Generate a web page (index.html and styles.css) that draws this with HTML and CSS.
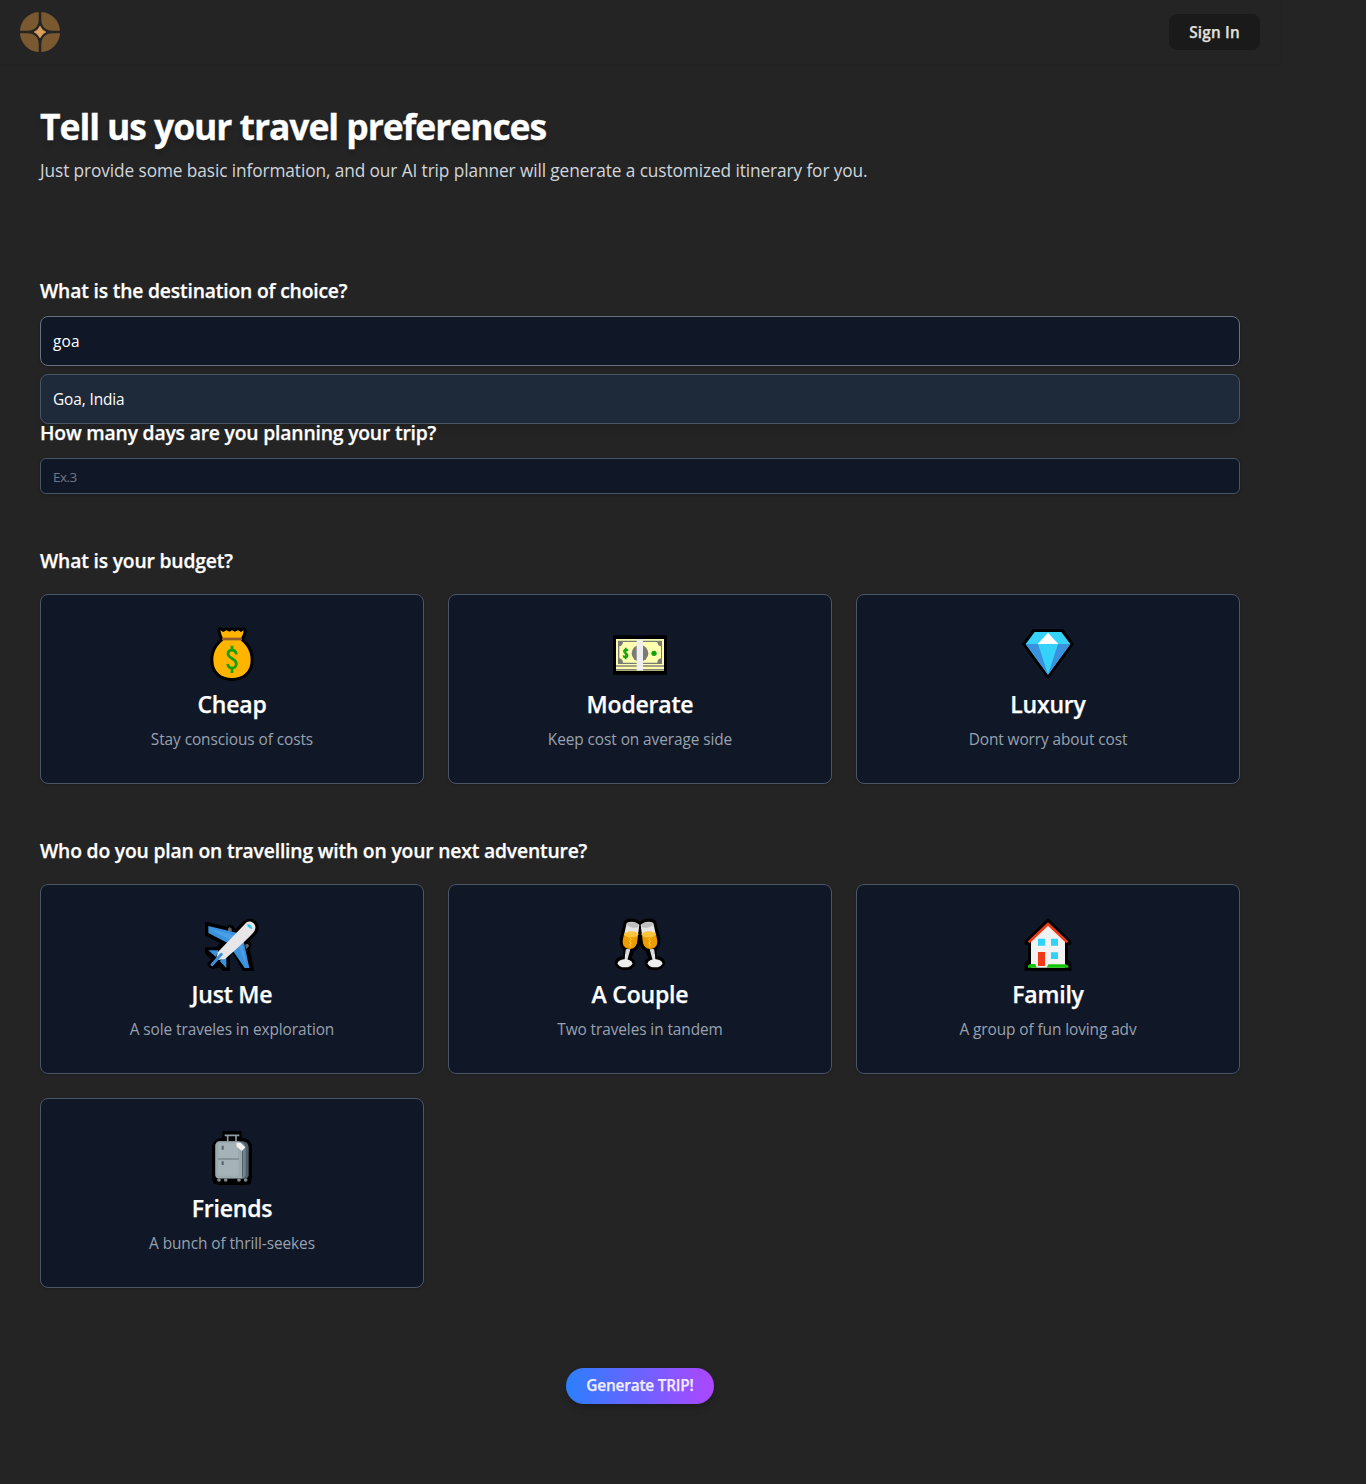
FILE: index.html
```html
<!DOCTYPE html>
<html lang="en">
<head>
<meta charset="utf-8">
<title>Trip Planner</title>
<link rel="stylesheet" href="styles.css">
</head>
<body>
<div class="page">
  <header class="header">
    <svg class="logo" viewBox="0 0 40 40">
      <g fill="#7a5931">
        <path d="M18.7 0V7Q18.7 18.7 7 18.7H0A20 20 0 0 1 18.7 0Z"/>
        <path d="M21.3 0V7Q21.3 18.7 33 18.7H40A20 20 0 0 0 21.3 0Z"/>
        <path d="M18.7 40V33Q18.7 21.3 7 21.3H0A20 20 0 0 0 18.7 40Z"/>
        <path d="M21.3 40V33Q21.3 21.3 33 21.3H40A20 20 0 0 1 21.3 40Z"/>
      </g>
      <path d="M20 14Q21.8 18.2 26 20Q21.8 21.8 20 26Q18.2 21.8 14 20Q18.2 18.2 20 14Z" fill="#d99f59" stroke="#d99f59" stroke-width=".5"/>
    </svg>
    <button class="sign-in">Sign In</button>
  </header>
  <main class="main">
    <h1 class="title">Tell us your travel preferences</h1>
    <p class="subtitle">Just provide some basic information, and our AI trip planner will generate a customized itinerary for you.</p>

    <section class="field destination">
      <h2 class="question">What is the destination of choice?</h2>
      <div class="input input-large">goa</div>
      <div class="suggestion">Goa, India</div>
    </section>
    <section class="field days">
      <h2 class="question">How many days are you planning your trip?</h2>
      <div class="input input-small">Ex.3</div>
    </section>

    <section class="options">
      <h2 class="question">What is your budget?</h2>
      <div class="grid">
        <article class="card">
          <svg class="icon" viewBox="30 12 180 180">
            <path d="M85 31L94 36L103 31L113 35L120 31L128 35L138 31L147 36L155 31L153 43L147 55V62C163 74 176 92 176 120C176 155 153 174 120 174C87 174 64 155 64 120C64 92 77 74 93 62V55L88 43Z" fill="#ffb400" stroke="#000" stroke-width="18" stroke-linejoin="round" paint-order="stroke"/>
            <path d="M90 57H150" stroke="#925d2b" stroke-width="8"/>
            <path d="M120 77V92M120 145V159M133 103C131 86 107 87 108 102C109 117 133 114 133 131C133 149 108 148 107 132" fill="none" stroke="#13a10e" stroke-width="8.5"/>
          </svg>
          <h3 class="card-title">Cheap</h3>
          <p class="card-text">Stay conscious of costs</p>
        </article>
        <article class="card">
          <svg class="icon" viewBox="30 12 180 180">
            <path d="M39 46H201V164H39Z" fill="#000"/>
            <path d="M48 57H192V152H48Z" fill="#fdffb0"/>
            <path d="M54 62H186V132H54Z" fill="#7b7b75"/>
            <path d="M69 66H172Q173 78 183 79V115Q173 116 172 128H69Q68 116 58 115V79Q68 78 69 66Z" fill="#fdffb0"/>
            <circle cx="120" cy="100" r="25" fill="#7b7b75"/>
            <path d="M48 138H192M48 149H192" stroke="#83836f" stroke-width="4"/>
            <path d="M110 57H129V152H110Z" fill="#eee"/>
            <path d="M77 83V118M83 93C81 85 70 88 72 95C74 101 83 99 83 107C82 115 71 114 70 106" fill="none" stroke="#13a10e" stroke-width="5"/>
            <circle cx="162" cy="100" r="8" fill="#13a10e"/>
          </svg>
          <h3 class="card-title">Moderate</h3>
          <p class="card-text">Keep cost on average side</p>
        </article>
        <article class="card">
          <svg class="icon" viewBox="30 12 180 180">
            <path d="M75 27H165L198 72L120 178L42 72Z" fill="#000"/>
            <path d="M80 36H160L187 72L120 164L53 72Z" fill="#35d2fa"/>
            <path d="M53 72H90L120 164ZM187 72H150L120 164Z" fill="#3a91dd"/>
            <path d="M120 38L151 72H89Z" fill="#fff"/>
          </svg>
          <h3 class="card-title">Luxury</h3>
          <p class="card-text">Dont worry about cost</p>
        </article>
      </div>
    </section>

    <section class="options companions">
      <h2 class="question">Who do you plan on travelling with on your next adventure?</h2>
      <div class="grid">
        <article class="card">
          <svg class="icon" viewBox="30 12 180 180">
            <path d="M39 37H50L104 50Q112 38 124 48L130 57L155 33Q175 19 192 33Q207 50 195 70L173 94Q185 104 173 116L187 183H152L122 129L114 138V183H92L84 172L62 177Q48 175 46 160L57 148L39 130V112H72L84 100L39 76Z" fill="#000"/>
            <path d="M108 56L113 51L119 56V65H108ZM159 104L166 101L172 107L163 117Z" fill="#62666b"/>
            <path d="M49 48L137 69L107 99L49 69ZM154 89L172 174H158L121 120ZM49 121H79L72 141ZM103 139V174L83 153Z" fill="#3a91dd"/>
            <path d="M51 56L128 76L114 90ZM139 106L151 104L164 171Z" fill="#4b9fe6"/>
            <path d="M164 37C176 28 197 42 188 62Q182 74 99 147L72 151L77 127Z" fill="#e7e7e7"/>
            <path d="M88 133L60 164" stroke="#3a91dd" stroke-width="9" stroke-linecap="round"/>
            <path d="M165 43Q179 42 181 57Q168 56 165 43Z" fill="#28c9f7"/>
          </svg>
          <h3 class="card-title">Just Me</h3>
          <p class="card-text">A sole traveles in exploration</p>
        </article>
        <article class="card">
          <svg class="icon" viewBox="30 12 180 180">
            <g id="glass">
              <path d="M80 38Q100 29 118 44L115 89Q113 112 95 117L84 149Q98 152 97 162Q86 178 60 168Q49 160 56 152Q63 147 77 147L80 115Q67 108 68 88Z" fill="#000" stroke="#000" stroke-width="18" stroke-linejoin="round"/>
            </g>
            <use href="#glass" transform="translate(240 0) scale(-1 1)"/>
            <g id="drink">
              <path d="M80 39Q100 30 118 44L114 76H72Z" fill="#e5e5e5"/>
              <ellipse cx="99" cy="45" rx="18" ry="8" transform="rotate(8 99 45)" fill="#bfbfbf"/>
              <path d="M72 72L114 76L111 100Q103 121 84 116Q67 112 68 93Z" fill="#ee9d00"/>
              <ellipse cx="94" cy="73" rx="21" ry="9" fill="#ffc33c"/>
              <path d="M80 117L91 118L82 151H76Z" fill="#ddd"/>
              <ellipse cx="75" cy="160" rx="22" ry="12" fill="#eee"/>
              <path d="M79 118L75 151" stroke="#fff" stroke-width="3"/>
              <path d="M89 83L94 88L88 94L94 99L88 104L94 109" fill="none" stroke="#ffd45f" stroke-width="3"/>
            </g>
            <use href="#drink" transform="translate(240 0) scale(-1 1)"/>
          </svg>
          <h3 class="card-title">A Couple</h3>
          <p class="card-text">Two traveles in tandem</p>
        </article>
        <article class="card">
          <svg class="icon" viewBox="30 12 180 180">
            <path d="M120 24L190 93V104H180V149L190 158V182H50V158L60 149V104H50V93Z" fill="#000"/>
            <path d="M120 43L171 91V173H69V91Z" fill="#f2f2f2"/>
            <path d="M62 97L120 42L178 97" fill="none" stroke="#f03a17" stroke-width="8"/>
            <path d="M90 86H111V107H90ZM129 86H150V107H129ZM129 127H150V147H129Z" fill="#31d2f7"/>
            <path d="M90 126H111V168H90Z" fill="#f03a17"/>
            <path d="M60 173V166L68 162H82L86 173ZM116 173L121 163H173L181 167V173Z" fill="#16c60c"/>
          </svg>
          <h3 class="card-title">Family</h3>
          <p class="card-text">A group of fun loving adv</p>
        </article>
        <article class="card">
          <svg class="icon" viewBox="30 12 180 180">
            <path d="M91 21H149V41Q180 45 180 69V163L176 180L162 183H78L64 178L60 163V69Q62 45 91 41Z" fill="#000"/>
            <path d="M98 34H142M107 34V54M132 34V54" stroke="#929da1" stroke-width="5"/>
            <path d="M82 52H152Q169 54 170 70V154Q169 163 159 164H80Q70 162 70 153V65Q71 54 82 52Z" fill="#50606a"/>
            <path d="M81 52H139Q150 54 150 66V163H80Q70 161 70 152V65Q71 54 81 52Z" fill="#9ca9ae"/>
            <path d="M143 54Q154 61 153 74V156L145 164Q161 164 161 151V71Q160 56 143 54Z" fill="#75838a"/>
            <path d="M79 58H138V102H79ZM78 108H140V155H78Z" fill="#a5b2b7"/>
            <path d="M78 105H141" stroke="#6f7d84" stroke-width="3"/>
            <path d="M92 65V77M92 112V123" stroke="#52616a" stroke-width="6"/>
            <path d="M133 56H146L160 70L150 81L134 68Z" fill="#f2f2f2"/>
            <g fill="#80888c">
              <circle cx="81" cy="168" r="5.5"/>
              <circle cx="101" cy="168" r="5.5"/>
              <circle cx="141" cy="168" r="5.5"/>
              <circle cx="161" cy="168" r="5.5"/>
            </g>
          </svg>
          <h3 class="card-title">Friends</h3>
          <p class="card-text">A bunch of thrill-seekes</p>
        </article>
      </div>
    </section>
    <div class="actions"><button class="generate">Generate TRIP!</button></div>
  </main>
</div>
</body>
</html>
```

FILE: styles.css
```css
* { box-sizing: border-box; }
body {
  margin: 0;
  background: #242424;
  color: #fff;
  font-family: "Segoe UI", "Open Sans", "Noto Sans", sans-serif;
  font-size: 15.4px;
  line-height: 24px;
}
h1, h2, h3, p { margin: 0; white-space: nowrap; }
button { font: inherit; border: 0; padding: 0; }
.page { width: 1280px; height: 1484px; }
.header {
  height: 64px;
  padding: 0 20px;
  display: flex;
  align-items: center;
  justify-content: space-between;
  box-shadow: 0 1px 2px rgba(0, 0, 0, .1);
}
.logo { width: 40px; height: 40px; }
.sign-in {
  width: 91px;
  height: 36px;
  border-radius: 8px;
  background: #1a1a1a;
  color: #e0e0de;
  font-size: 15.3px;
  font-weight: 600;
  letter-spacing: .2px;
  -webkit-text-stroke: .25px;
}
.main { padding: 42px 40px 0; }
.title {
  font-size: 35.5px;
  line-height: 40px;
  font-weight: 700;
  letter-spacing: -1.07px;
  -webkit-text-stroke: .3px;
  text-shadow: 0 4px 5px rgba(0, 0, 0, .2);
}
.subtitle {
  margin-top: 11px;
  color: #d1d5dc;
  font-size: 17.3px;
  line-height: 28px;
  letter-spacing: -.105px;
}
.field { position: relative; }
.destination { margin-top: 92px; }
.question {
  font-size: 19.3px;
  line-height: 28px;
  font-weight: 600;
  letter-spacing: -.17px;
  -webkit-text-stroke: .25px;
}
.input {
  margin-top: 11px;
  padding: 2px 12px 0;
  display: flex;
  align-items: center;
  border: 1px solid #4a5565;
  border-radius: 6px;
  background: #101828;
  box-shadow: 0 1px 3px rgba(0, 0, 0, .25);
}
.input-large { height: 50px; border-color: #6a7282; border-radius: 8px; letter-spacing: .15px; }
.input-small { height: 36px; color: #717784; font-size: 13.5px; letter-spacing: -.5px; }
.suggestion {
  position: absolute;
  top: 97px;
  left: 0;
  width: 100%;
  height: 50px;
  padding: 13px 12px 11px;
  border: 1px solid #4a5565;
  border-radius: 8px;
  background: #1e2939;
  box-shadow: 0 4px 6px rgba(0, 0, 0, .12);
  letter-spacing: -.1px;
}
.days { margin-top: 53px; }
.options { margin-top: 53px; }
.grid {
  margin-top: 19px;
  display: grid;
  grid-template-columns: repeat(3, 384px);
  gap: 24px;
}
.card {
  height: 190px;
  padding: 29px 24px 0;
  border: 1px solid #4a5565;
  border-radius: 8px;
  background: #101828;
  box-shadow: 0 1px 3px rgba(0, 0, 0, .2);
  display: flex;
  flex-direction: column;
  align-items: center;
}
.icon { width: 60px; height: 60px; flex: none; }
.card-title {
  margin-top: 4px;
  font-size: 23px;
  line-height: 32px;
  font-weight: 600;
  letter-spacing: -.2px;
  -webkit-text-stroke: .25px;
}
.card-text { margin-top: 8px; color: #99a1af; letter-spacing: -.08px; }
.actions { margin-top: 80px; display: flex; justify-content: center; }
.generate {
  width: 148px;
  height: 36px;
  border-radius: 18px;
  background: linear-gradient(90deg, #2b7fff, #ad46ff);
  color: #f0ecff;
  font-size: 15.4px;
  font-weight: 600;
  letter-spacing: -.2px;
  -webkit-text-stroke: .25px;
  box-shadow: 0 4px 6px rgba(0, 0, 0, .22);
}
```
